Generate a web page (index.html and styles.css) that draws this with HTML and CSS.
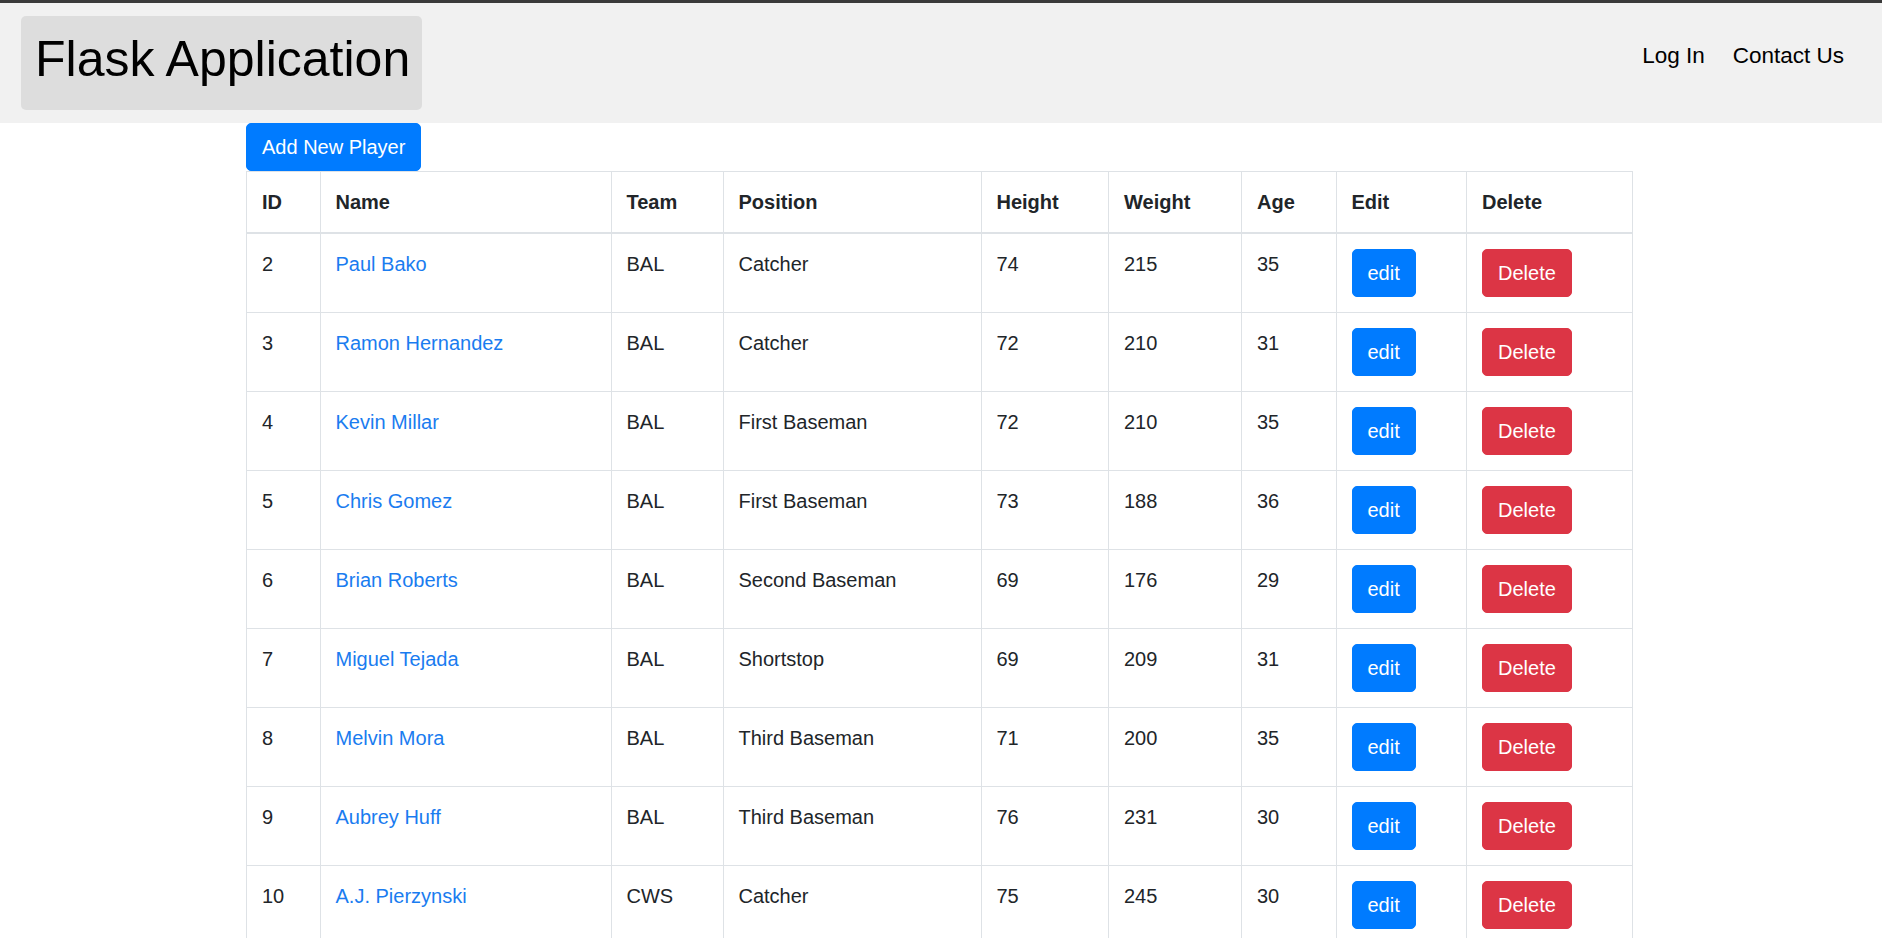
FILE: index.html
```html
<!DOCTYPE html>
<html lang="en">
<head>
<meta charset="utf-8">
<title>Flask Application</title>
<link rel="stylesheet" href="styles.css">
</head>
<body>
<header class="navbar">
  <a class="brand" href="#">Flask Application</a>
  <nav class="nav">
    <a class="nav-link" href="#">Log In</a>
    <a class="nav-link" href="#">Contact Us</a>
  </nav>
</header>
<main class="container">
  <a class="btn btn-primary" href="#">Add New Player</a>
  <table class="table">
    <colgroup>
      <col class="c-id"><col class="c-name"><col class="c-team"><col class="c-pos"><col class="c-h"><col class="c-w"><col class="c-age"><col class="c-edit"><col class="c-del">
    </colgroup>
    <thead>
      <tr><th>ID</th><th>Name</th><th>Team</th><th>Position</th><th>Height</th><th>Weight</th><th>Age</th><th>Edit</th><th>Delete</th></tr>
    </thead>
    <tbody>
      <tr><td>2</td><td><a href="#">Paul Bako</a></td><td>BAL</td><td>Catcher</td><td>74</td><td>215</td><td>35</td><td><a class="btn btn-primary" href="#">edit</a></td><td><a class="btn btn-danger" href="#">Delete</a></td></tr>
      <tr><td>3</td><td><a href="#">Ramon Hernandez</a></td><td>BAL</td><td>Catcher</td><td>72</td><td>210</td><td>31</td><td><a class="btn btn-primary" href="#">edit</a></td><td><a class="btn btn-danger" href="#">Delete</a></td></tr>
      <tr><td>4</td><td><a href="#">Kevin Millar</a></td><td>BAL</td><td>First Baseman</td><td>72</td><td>210</td><td>35</td><td><a class="btn btn-primary" href="#">edit</a></td><td><a class="btn btn-danger" href="#">Delete</a></td></tr>
      <tr><td>5</td><td><a href="#">Chris Gomez</a></td><td>BAL</td><td>First Baseman</td><td>73</td><td>188</td><td>36</td><td><a class="btn btn-primary" href="#">edit</a></td><td><a class="btn btn-danger" href="#">Delete</a></td></tr>
      <tr><td>6</td><td><a href="#">Brian Roberts</a></td><td>BAL</td><td>Second Baseman</td><td>69</td><td>176</td><td>29</td><td><a class="btn btn-primary" href="#">edit</a></td><td><a class="btn btn-danger" href="#">Delete</a></td></tr>
      <tr><td>7</td><td><a href="#">Miguel Tejada</a></td><td>BAL</td><td>Shortstop</td><td>69</td><td>209</td><td>31</td><td><a class="btn btn-primary" href="#">edit</a></td><td><a class="btn btn-danger" href="#">Delete</a></td></tr>
      <tr><td>8</td><td><a href="#">Melvin Mora</a></td><td>BAL</td><td>Third Baseman</td><td>71</td><td>200</td><td>35</td><td><a class="btn btn-primary" href="#">edit</a></td><td><a class="btn btn-danger" href="#">Delete</a></td></tr>
      <tr><td>9</td><td><a href="#">Aubrey Huff</a></td><td>BAL</td><td>Third Baseman</td><td>76</td><td>231</td><td>30</td><td><a class="btn btn-primary" href="#">edit</a></td><td><a class="btn btn-danger" href="#">Delete</a></td></tr>
      <tr><td>10</td><td><a href="#">A.J. Pierzynski</a></td><td>CWS</td><td>Catcher</td><td>75</td><td>245</td><td>30</td><td><a class="btn btn-primary" href="#">edit</a></td><td><a class="btn btn-danger" href="#">Delete</a></td></tr>
    </tbody>
  </table>
</main>
</body>
</html>
```

FILE: styles.css
```css
html {
  overflow: hidden;
}
body {
  margin: 0;
  font-family: "Liberation Sans", Arial, sans-serif;
  font-size: 20px;
  line-height: 30px;
  color: #212529;
  background: #fff;
}
a {
  color: #1a7cf0;
  text-decoration: none;
}
.navbar {
  display: flex;
  justify-content: space-between;
  align-items: flex-start;
  background: #f1f1f1;
  border-top: 3px solid #3a3a3a;
  padding: 13px 38px 13px 21px;
}
.brand {
  display: block;
  background: #dddddd;
  border-radius: 5px;
  color: #000;
  font-size: 50px;
  line-height: 60px;
  padding: 13px 12px 21px 14px;
}
.nav {
  display: flex;
  gap: 28px;
  margin-top: 23px;
}
.nav-link {
  color: #000;
  font-size: 22.5px;
  line-height: 33px;
}
.container {
  width: 1386px;
  margin: 0 0 0 246px;
}
.btn {
  display: inline-block;
  color: #fff;
  font-size: 20px;
  line-height: 30px;
  padding: 8px 15px;
  border: 1px solid transparent;
  border-radius: 5px;
  vertical-align: top;
}
.btn-primary {
  background: #007bff;
  border-color: #007bff;
}
.btn-danger {
  background: #dc3545;
  border-color: #dc3545;
}
.table {
  width: 1386px;
  table-layout: fixed;
  border-collapse: collapse;
}
.table th,
.table td {
  border: 1px solid #dee2e6;
  padding: 15px;
  text-align: left;
  vertical-align: top;
}
.table th {
  font-weight: bold;
}
.table thead th {
  border-bottom: 2px solid #dee2e6;
}
.c-id { width: 73.5px; }
.c-name { width: 291px; }
.c-team { width: 112px; }
.c-pos { width: 258px; }
.c-h { width: 127.5px; }
.c-w { width: 133px; }
.c-age { width: 94.5px; }
.c-edit { width: 130.5px; }
.c-del { width: 166px; }
```
